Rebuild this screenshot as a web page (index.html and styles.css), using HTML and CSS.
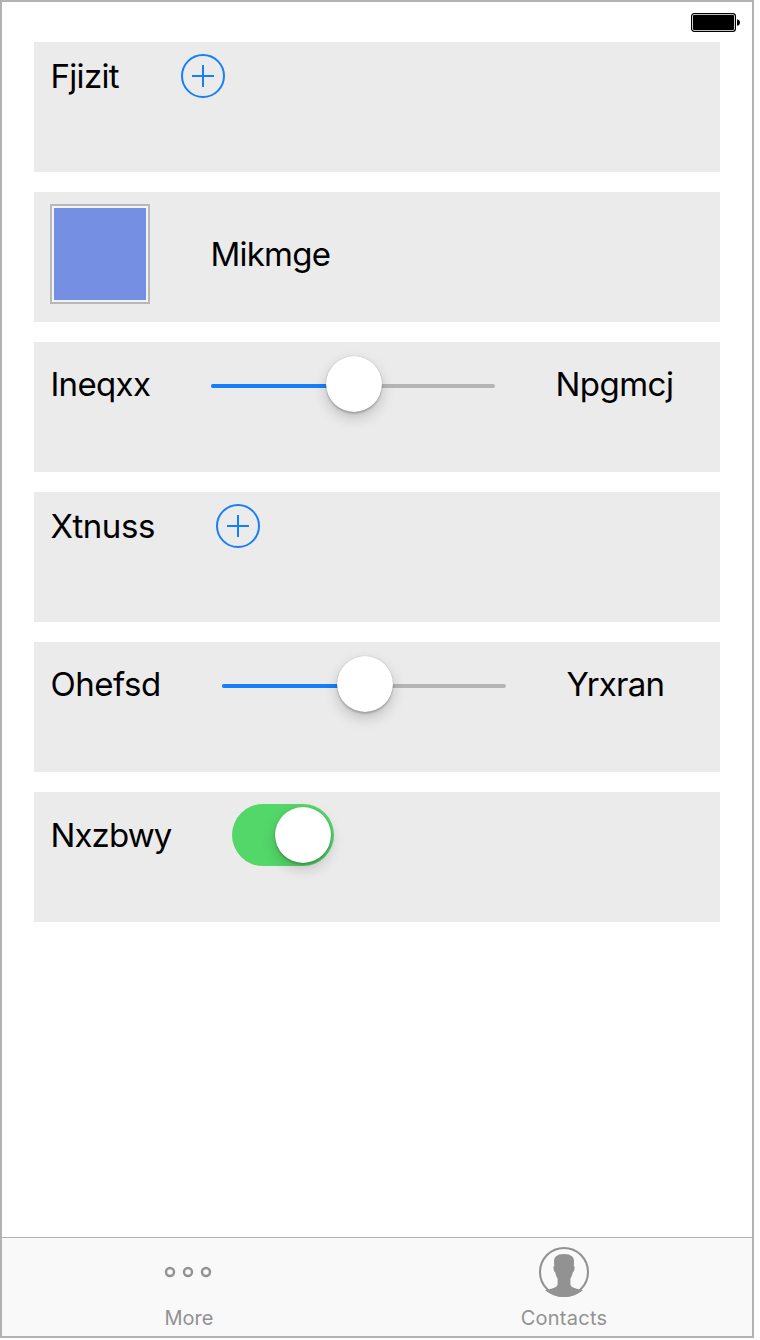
FILE: index.html
```html
<!DOCTYPE html>
<html lang="en">
<head>
<meta charset="utf-8">
<title>Controls</title>
<link rel="stylesheet" href="styles.css">
</head>
<body>
<div class="phone">
  <header class="status-bar">
    <svg class="battery" width="50" height="20" viewBox="0 0 50 20">
      <rect x="0.6" y="0.6" width="43.8" height="17.8" rx="2.6" fill="#fff" stroke="#000" stroke-width="1.2"/>
      <rect x="2" y="2" width="41" height="15" rx="1" fill="#000"/>
      <path d="M46 6.2c1.8.3 3 1.600 3 3.300s-1.200 3-3 3.300z" fill="#000"/>
    </svg>
  </header>
  <main class="rows">
    <section class="row">
      <span class="label label-fjizit">Fjizit</span>
      <svg class="add" width="44" height="44" viewBox="0 0 44 44"><circle cx="22" cy="22" r="21"/><path d="M22 11v22M11 22h22"/></svg>
    </section>
    <section class="row">
      <span class="swatch"></span>
      <span class="label label-mikmge">Mikmge</span>
    </section>
    <section class="row">
      <span class="label label-ineqxx">Ineqxx</span>
      <div class="slider"><span class="fill"></span><span class="thumb"></span></div>
      <span class="label label-npgmcj">Npgmcj</span>
    </section>
    <section class="row">
      <span class="label label-xtnuss">Xtnuss</span>
      <svg class="add" width="44" height="44" viewBox="0 0 44 44"><circle cx="22" cy="22" r="21"/><path d="M22 11v22M11 22h22"/></svg>
    </section>
    <section class="row">
      <span class="label label-ohefsd">Ohefsd</span>
      <div class="slider"><span class="fill"></span><span class="thumb"></span></div>
      <span class="label label-yrxran">Yrxran</span>
    </section>
    <section class="row">
      <span class="label label-nxzbwy">Nxzbwy</span>
      <div class="switch"><span class="thumb"></span></div>
    </section>
  </main>
  <nav class="tab-bar">
    <div class="tab">
      <svg class="tab-icon" width="52" height="52" viewBox="0 0 52 52" fill="none" stroke="#929292" stroke-width="2.4">
        <circle cx="7" cy="26" r="4"/><circle cx="25" cy="26" r="4"/><circle cx="43" cy="26" r="4"/>
      </svg>
      <span class="tab-label tab-more">More</span>
    </div>
    <div class="tab">
      <svg class="tab-icon" width="52" height="52" viewBox="0 0 52 52">
        <circle cx="26" cy="26" r="24" fill="none" stroke="#929292" stroke-width="2.1"/>
        <path fill="#929292" d="M26 8c3.500 0 6.500.8 8.200 2.500 2 2 2 5 1.500 9.500 1 .2 1 1.500.7 3-.3 1.700-.8 3-1.600 3.200-.4 2.300-1.200 4.600-2.400 6.200v5.300c0 2.300 1.500 3.500 4 4.300 3 1 6.200 1.400 8.300 2.300C40 48.500 33.500 51 26 51S12 48.500 7.300 44.300c2.100-.9 5.300-1.300 8.300-2.300 2.500-.8 4-2 4-4.300v-5.300c-1.200-1.600-2-3.900-2.400-6.200-.8-.2-1.300-1.500-1.600-3.200-.3-1.500-.3-2.800.7-3-.5-4.500-.5-7.500 1.500-9.500C19.500 8.800 22.500 8 26 8z"/>
      </svg>
      <span class="tab-label tab-contacts">Contacts</span>
    </div>
  </nav>
</div>
</body>
</html>
```

FILE: styles.css
```css
body {
  margin: 0;
  background: #fff;
  font-family: Inter, "Liberation Sans", sans-serif;
  color: #000;
}

.phone {
  box-sizing: border-box;
  display: flex;
  flex-direction: column;
  width: 754px;
  height: 1338px;
  border: 2px solid #b2b2b2;
}

.status-bar {
  display: flex;
  justify-content: flex-end;
  box-sizing: border-box;
  height: 40px;
  padding: 11px 11px 0 0;
}

.rows {
  display: flex;
  flex: 1;
  flex-direction: column;
  gap: 20px;
  padding: 0 32px;
}

.row {
  display: flex;
  align-items: flex-start;
  box-sizing: border-box;
  height: 130px;
  padding: 12px 16px;
  gap: 60px;
  background: #ebebeb;
}

.label {
  box-sizing: border-box;
  flex: none;
  padding-left: 0.4px;
  font-size: 33px;
  line-height: 44px;
  white-space: nowrap;
}

.label-fjizit { width: 71px; letter-spacing: -0.65px; }
.label-mikmge { width: 122px; line-height: 100px; letter-spacing: -0.75px; }
.label-ineqxx { width: 101px; line-height: 60px; letter-spacing: -0.65px; }
.label-npgmcj { width: 120px; line-height: 60px; letter-spacing: -0.5px; }
.label-xtnuss { width: 106px; letter-spacing: -0.45px; }
.label-ohefsd { width: 112px; line-height: 60px; letter-spacing: -0.45px; }
.label-yrxran { width: 100px; line-height: 60px; letter-spacing: -0.8px; }
.label-nxzbwy { width: 122px; line-height: 62px; letter-spacing: -0.85px; }

.add {
  flex: none;
  fill: none;
  stroke: #157efb;
  stroke-width: 2;
}

.swatch {
  box-sizing: border-box;
  width: 100px;
  height: 100px;
  border: 2px solid #b8b8b8;
  background: #758fe2;
  box-shadow: inset 0 0 0 2px #f3f4fa;
}

.slider {
  display: flex;
  align-items: center;
  justify-content: center;
  position: relative;
  width: 284px;
  height: 4px;
  margin-top: 30px;
  border-radius: 2px;
  background: #b5b5b5;
}

.fill {
  position: absolute;
  left: 0;
  width: 50%;
  height: 4px;
  border-radius: 2px;
  background: #157efb;
}

.thumb {
  flex: none;
  width: 56px;
  height: 56px;
  border-radius: 50%;
  background: #fff;
  box-shadow: 0 0 1px rgba(0, 0, 0, .3), 0 2px 2px rgba(0, 0, 0, .18), 0 6px 14px rgba(0, 0, 0, .18);
}

.slider .thumb {
  position: relative;
  top: -2px;
  left: 1px;
}

.switch {
  display: flex;
  align-items: center;
  justify-content: flex-end;
  box-sizing: border-box;
  width: 102px;
  height: 62px;
  padding-right: 3px;
  border-radius: 31px;
  background: #53d769;
}

.tab-bar {
  display: grid;
  grid-template-columns: 1fr 1fr;
  box-sizing: border-box;
  height: 99px;
  border-top: 1px solid #b2b2b2;
  background: #f9f9f9;
}

.tab {
  display: flex;
  flex-direction: column;
  align-items: center;
  padding: 8px 1px 0 0;
}

.tab-icon {
  margin-right: 1px;
}

.tab-label {
  margin-top: 8px;
  font-size: 20px;
  line-height: 24px;
  color: #929292;
}

.tab-contacts {
  letter-spacing: 0.25px;
}
```
